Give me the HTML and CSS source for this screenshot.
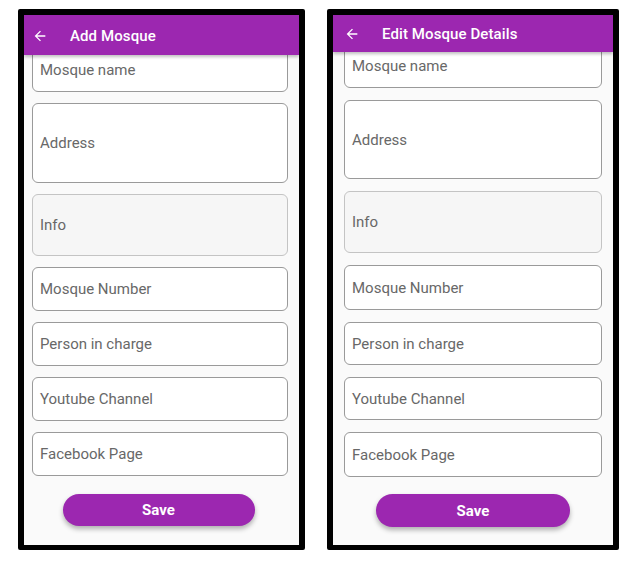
FILE: index.html
```html
<!DOCTYPE html>
<html>
<head>
<meta charset="utf-8">
<link rel="stylesheet" href="styles.css">
</head>
<body>
<div class="stage">
  <div class="phone phone-add">
    <div class="screen">
      <div class="appbar">
        <svg class="back" viewBox="0 0 24 24"><path d="M20 11H7.83l5.59-5.59L12 4l-8 8 8 8 1.41-1.41L7.83 13H20v-2z" fill="#fff"/></svg>
        <span class="title">Add Mosque</span>
      </div>
      <div class="form">
        <div class="field h44">Mosque name</div>
        <div class="field h80">Address</div>
        <div class="field info h62">Info</div>
        <div class="field h44">Mosque Number</div>
        <div class="field h44">Person in charge</div>
        <div class="field h44">Youtube Channel</div>
        <div class="field h44">Facebook Page</div>
        <div class="btn-row"><button class="save">Save</button></div>
      </div>
    </div>
  </div>
  <div class="phone phone-edit">
    <div class="screen">
      <div class="appbar">
        <svg class="back" viewBox="0 0 24 24"><path d="M20 11H7.83l5.59-5.59L12 4l-8 8 8 8 1.41-1.41L7.83 13H20v-2z" fill="#fff"/></svg>
        <span class="title">Edit Mosque Details</span>
      </div>
      <div class="form">
        <div class="field h44">Mosque name</div>
        <div class="field h79">Address</div>
        <div class="field info h62">Info</div>
        <div class="field h45">Mosque Number</div>
        <div class="field h43">Person in charge</div>
        <div class="field h43">Youtube Channel</div>
        <div class="field h45">Facebook Page</div>
        <div class="btn-row"><button class="save">Save</button></div>
      </div>
    </div>
  </div>
</div>
</body>
</html>
```

FILE: styles.css
```css
* { box-sizing: border-box; }
html, body { margin: 0; padding: 0; background: #fff; }
body { font-family: Roboto, "Noto Sans", Arial, sans-serif; }

.stage {
  display: flex;
  align-items: flex-start;
  padding: 9px 0 0 18px;
  gap: 22px;
}

.phone {
  border: 6px solid #000;
  border-bottom-width: 5px;
  border-radius: 2px;
  background: #000;
}
.phone-add { width: 287px; height: 541px; }
.phone-edit { width: 292px; height: 541px; }

.screen {
  position: relative;
  width: 100%;
  height: 100%;
  overflow: hidden;
  background: #fafafa;
}

.appbar {
  position: absolute;
  top: 0; left: 0; right: 0;
  z-index: 2;
  display: flex;
  align-items: center;
  background: #9c27b0;
  color: #fff;
  box-shadow: 0 2px 3px rgba(0,0,0,0.25);
}
.phone-add .appbar { height: 40px; padding: 1px 0 0 8px; }
.phone-edit .appbar { height: 37px; padding-left: 11px; }

.back { width: 16px; height: 16px; flex: none; }
.title {
  font-size: 15px;
  font-weight: 500;
  letter-spacing: 0.1px;
}
.phone-add .title { margin-left: 22px; }
.phone-edit .title { margin-left: 22px; }

.form {
  display: flex;
  flex-direction: column;
}
.phone-add .form { padding: 33px 11px 0 8px; gap: 11px; }
.phone-edit .form { padding: 29px 11px 0 11px; gap: 12px; }

.field {
  display: flex;
  align-items: center;
  padding-left: 7px;
  background: #fff;
  border: 1px solid #9a9a9a;
  border-radius: 6px;
  font-size: 15px;
  color: #686868;
}
.field.info {
  background: #f6f6f6;
  border-color: #c4c4c4;
}
.h43 { height: 43px; }
.h44 { height: 44px; }
.h45 { height: 45px; }
.h62 { height: 62px; }
.h79 { height: 79px; }
.h80 { height: 80px; }

.btn-row {
  display: flex;
  justify-content: center;
}
.phone-add .btn-row { padding-right: 3px; margin-top: 7px; }
.phone-edit .btn-row { margin-top: 5px; }
.phone-add .save { width: 192px; height: 32px; }
.phone-edit .save { width: 194px; height: 33px; }
.save {
  border: none;
  border-radius: 17px;
  background: #9c27b0;
  color: #fff;
  font-family: Roboto, "Noto Sans", Arial, sans-serif;
  font-size: 15px;
  font-weight: 700;
  box-shadow: 0 3px 5px rgba(0,0,0,0.3);
}
```
